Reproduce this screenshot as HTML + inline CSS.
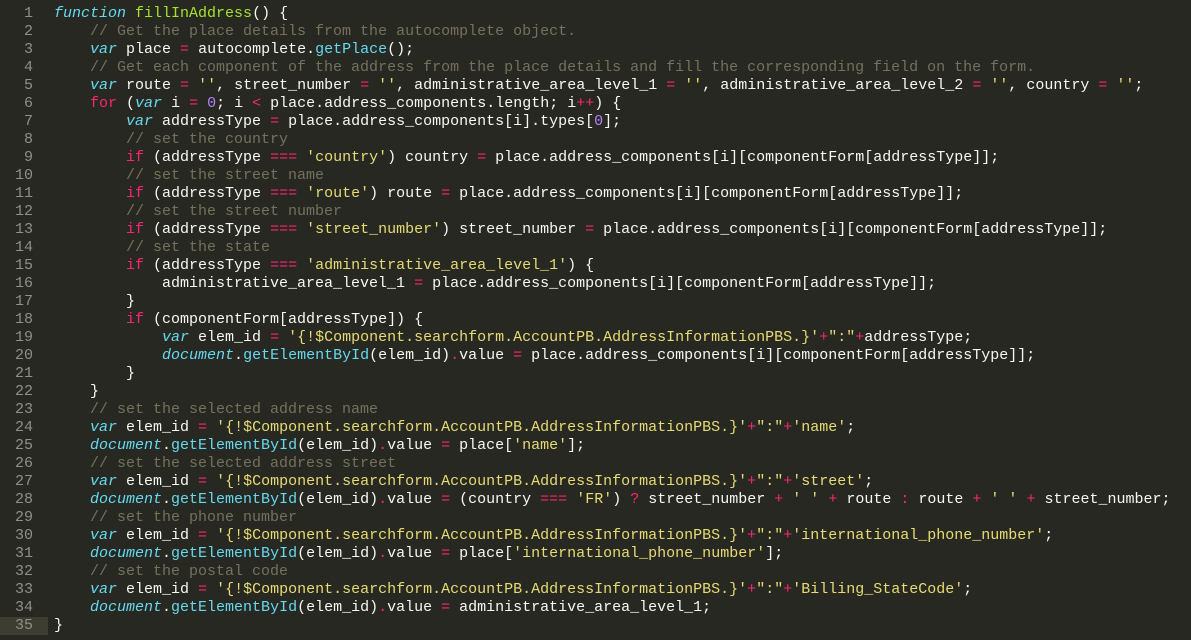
<!DOCTYPE html>
<html><head><meta charset="utf-8"><style>
html,body{margin:0;padding:0;background:#272822;width:1191px;height:640px;overflow:hidden}
.w{position:relative;padding-top:5px}
.l{height:18px;line-height:18px;font-family:"Liberation Mono",monospace;font-size:15px;color:#f8f8f2;white-space:pre;position:relative}
.n{position:absolute;left:0;width:33px;text-align:right;color:#8f908a}
.cur{position:absolute;left:0;width:48px;height:18px;background:#3e3d32}
.t{position:absolute;left:54px}
.k{color:#f92672}.s{color:#66d9ef;font-style:italic}.f{color:#66d9ef}.g{color:#a6e22e}.y{color:#e6db74}.p{color:#ae81ff}.c{color:#75715e}
</style></head><body><div class="w">
<div class="l"><span class="n">1</span><span class="t"><span class="s">function</span> <span class="g">fillInAddress</span>() {</span></div>
<div class="l"><span class="n">2</span><span class="t">    <span class="c">// Get the place details from the autocomplete object.</span></span></div>
<div class="l"><span class="n">3</span><span class="t">    <span class="s">var</span> place <span class="k">=</span> autocomplete.<span class="f">getPlace</span>();</span></div>
<div class="l"><span class="n">4</span><span class="t">    <span class="c">// Get each component of the address from the place details and fill the corresponding field on the form.</span></span></div>
<div class="l"><span class="n">5</span><span class="t">    <span class="s">var</span> route <span class="k">=</span> <span class="y">''</span>, street_number <span class="k">=</span> <span class="y">''</span>, administrative_area_level_1 <span class="k">=</span> <span class="y">''</span>, administrative_area_level_2 <span class="k">=</span> <span class="y">''</span>, country <span class="k">=</span> <span class="y">''</span>;</span></div>
<div class="l"><span class="n">6</span><span class="t">    <span class="k">for</span> (<span class="s">var</span> i <span class="k">=</span> <span class="p">0</span>; i <span class="k">&lt;</span> place.address_components.length; i<span class="k">++</span>) {</span></div>
<div class="l"><span class="n">7</span><span class="t">        <span class="s">var</span> addressType <span class="k">=</span> place.address_components[i].types[<span class="p">0</span>];</span></div>
<div class="l"><span class="n">8</span><span class="t">        <span class="c">// set the country</span></span></div>
<div class="l"><span class="n">9</span><span class="t">        <span class="k">if</span> (addressType <span class="k">===</span> <span class="y">'country'</span>) country <span class="k">=</span> place.address_components[i][componentForm[addressType]];</span></div>
<div class="l"><span class="n">10</span><span class="t">        <span class="c">// set the street name</span></span></div>
<div class="l"><span class="n">11</span><span class="t">        <span class="k">if</span> (addressType <span class="k">===</span> <span class="y">'route'</span>) route <span class="k">=</span> place.address_components[i][componentForm[addressType]];</span></div>
<div class="l"><span class="n">12</span><span class="t">        <span class="c">// set the street number</span></span></div>
<div class="l"><span class="n">13</span><span class="t">        <span class="k">if</span> (addressType <span class="k">===</span> <span class="y">'street_number'</span>) street_number <span class="k">=</span> place.address_components[i][componentForm[addressType]];</span></div>
<div class="l"><span class="n">14</span><span class="t">        <span class="c">// set the state</span></span></div>
<div class="l"><span class="n">15</span><span class="t">        <span class="k">if</span> (addressType <span class="k">===</span> <span class="y">'administrative_area_level_1'</span>) {</span></div>
<div class="l"><span class="n">16</span><span class="t">            administrative_area_level_1 <span class="k">=</span> place.address_components[i][componentForm[addressType]];</span></div>
<div class="l"><span class="n">17</span><span class="t">        }</span></div>
<div class="l"><span class="n">18</span><span class="t">        <span class="k">if</span> (componentForm[addressType]) {</span></div>
<div class="l"><span class="n">19</span><span class="t">            <span class="s">var</span> elem_id <span class="k">=</span> <span class="y">'{!$Component.searchform.AccountPB.AddressInformationPBS.}'</span><span class="k">+</span><span class="y">":"</span><span class="k">+</span>addressType;</span></div>
<div class="l"><span class="n">20</span><span class="t">            <span class="s">document</span>.<span class="f">getElementById</span>(elem_id)<span class="k">.</span>value <span class="k">=</span> place.address_components[i][componentForm[addressType]];</span></div>
<div class="l"><span class="n">21</span><span class="t">        }</span></div>
<div class="l"><span class="n">22</span><span class="t">    }</span></div>
<div class="l"><span class="n">23</span><span class="t">    <span class="c">// set the selected address name</span></span></div>
<div class="l"><span class="n">24</span><span class="t">    <span class="s">var</span> elem_id <span class="k">=</span> <span class="y">'{!$Component.searchform.AccountPB.AddressInformationPBS.}'</span><span class="k">+</span><span class="y">":"</span><span class="k">+</span><span class="y">'name'</span>;</span></div>
<div class="l"><span class="n">25</span><span class="t">    <span class="s">document</span>.<span class="f">getElementById</span>(elem_id)<span class="k">.</span>value <span class="k">=</span> place[<span class="y">'name'</span>];</span></div>
<div class="l"><span class="n">26</span><span class="t">    <span class="c">// set the selected address street</span></span></div>
<div class="l"><span class="n">27</span><span class="t">    <span class="s">var</span> elem_id <span class="k">=</span> <span class="y">'{!$Component.searchform.AccountPB.AddressInformationPBS.}'</span><span class="k">+</span><span class="y">":"</span><span class="k">+</span><span class="y">'street'</span>;</span></div>
<div class="l"><span class="n">28</span><span class="t">    <span class="s">document</span>.<span class="f">getElementById</span>(elem_id)<span class="k">.</span>value <span class="k">=</span> (country <span class="k">===</span> <span class="y">'FR'</span>) <span class="k">?</span> street_number <span class="k">+</span> <span class="y">' '</span> <span class="k">+</span> route <span class="k">:</span> route <span class="k">+</span> <span class="y">' '</span> <span class="k">+</span> street_number;</span></div>
<div class="l"><span class="n">29</span><span class="t">    <span class="c">// set the phone number</span></span></div>
<div class="l"><span class="n">30</span><span class="t">    <span class="s">var</span> elem_id <span class="k">=</span> <span class="y">'{!$Component.searchform.AccountPB.AddressInformationPBS.}'</span><span class="k">+</span><span class="y">":"</span><span class="k">+</span><span class="y">'international_phone_number'</span>;</span></div>
<div class="l"><span class="n">31</span><span class="t">    <span class="s">document</span>.<span class="f">getElementById</span>(elem_id)<span class="k">.</span>value <span class="k">=</span> place[<span class="y">'international_phone_number'</span>];</span></div>
<div class="l"><span class="n">32</span><span class="t">    <span class="c">// set the postal code</span></span></div>
<div class="l"><span class="n">33</span><span class="t">    <span class="s">var</span> elem_id <span class="k">=</span> <span class="y">'{!$Component.searchform.AccountPB.AddressInformationPBS.}'</span><span class="k">+</span><span class="y">":"</span><span class="k">+</span><span class="y">'Billing_StateCode'</span>;</span></div>
<div class="l"><span class="n">34</span><span class="t">    <span class="s">document</span>.<span class="f">getElementById</span>(elem_id)<span class="k">.</span>value <span class="k">=</span> administrative_area_level_1;</span></div>
<div class="l"><span class="cur"></span><span class="n">35</span><span class="t">}</span></div>
</div></body></html>
